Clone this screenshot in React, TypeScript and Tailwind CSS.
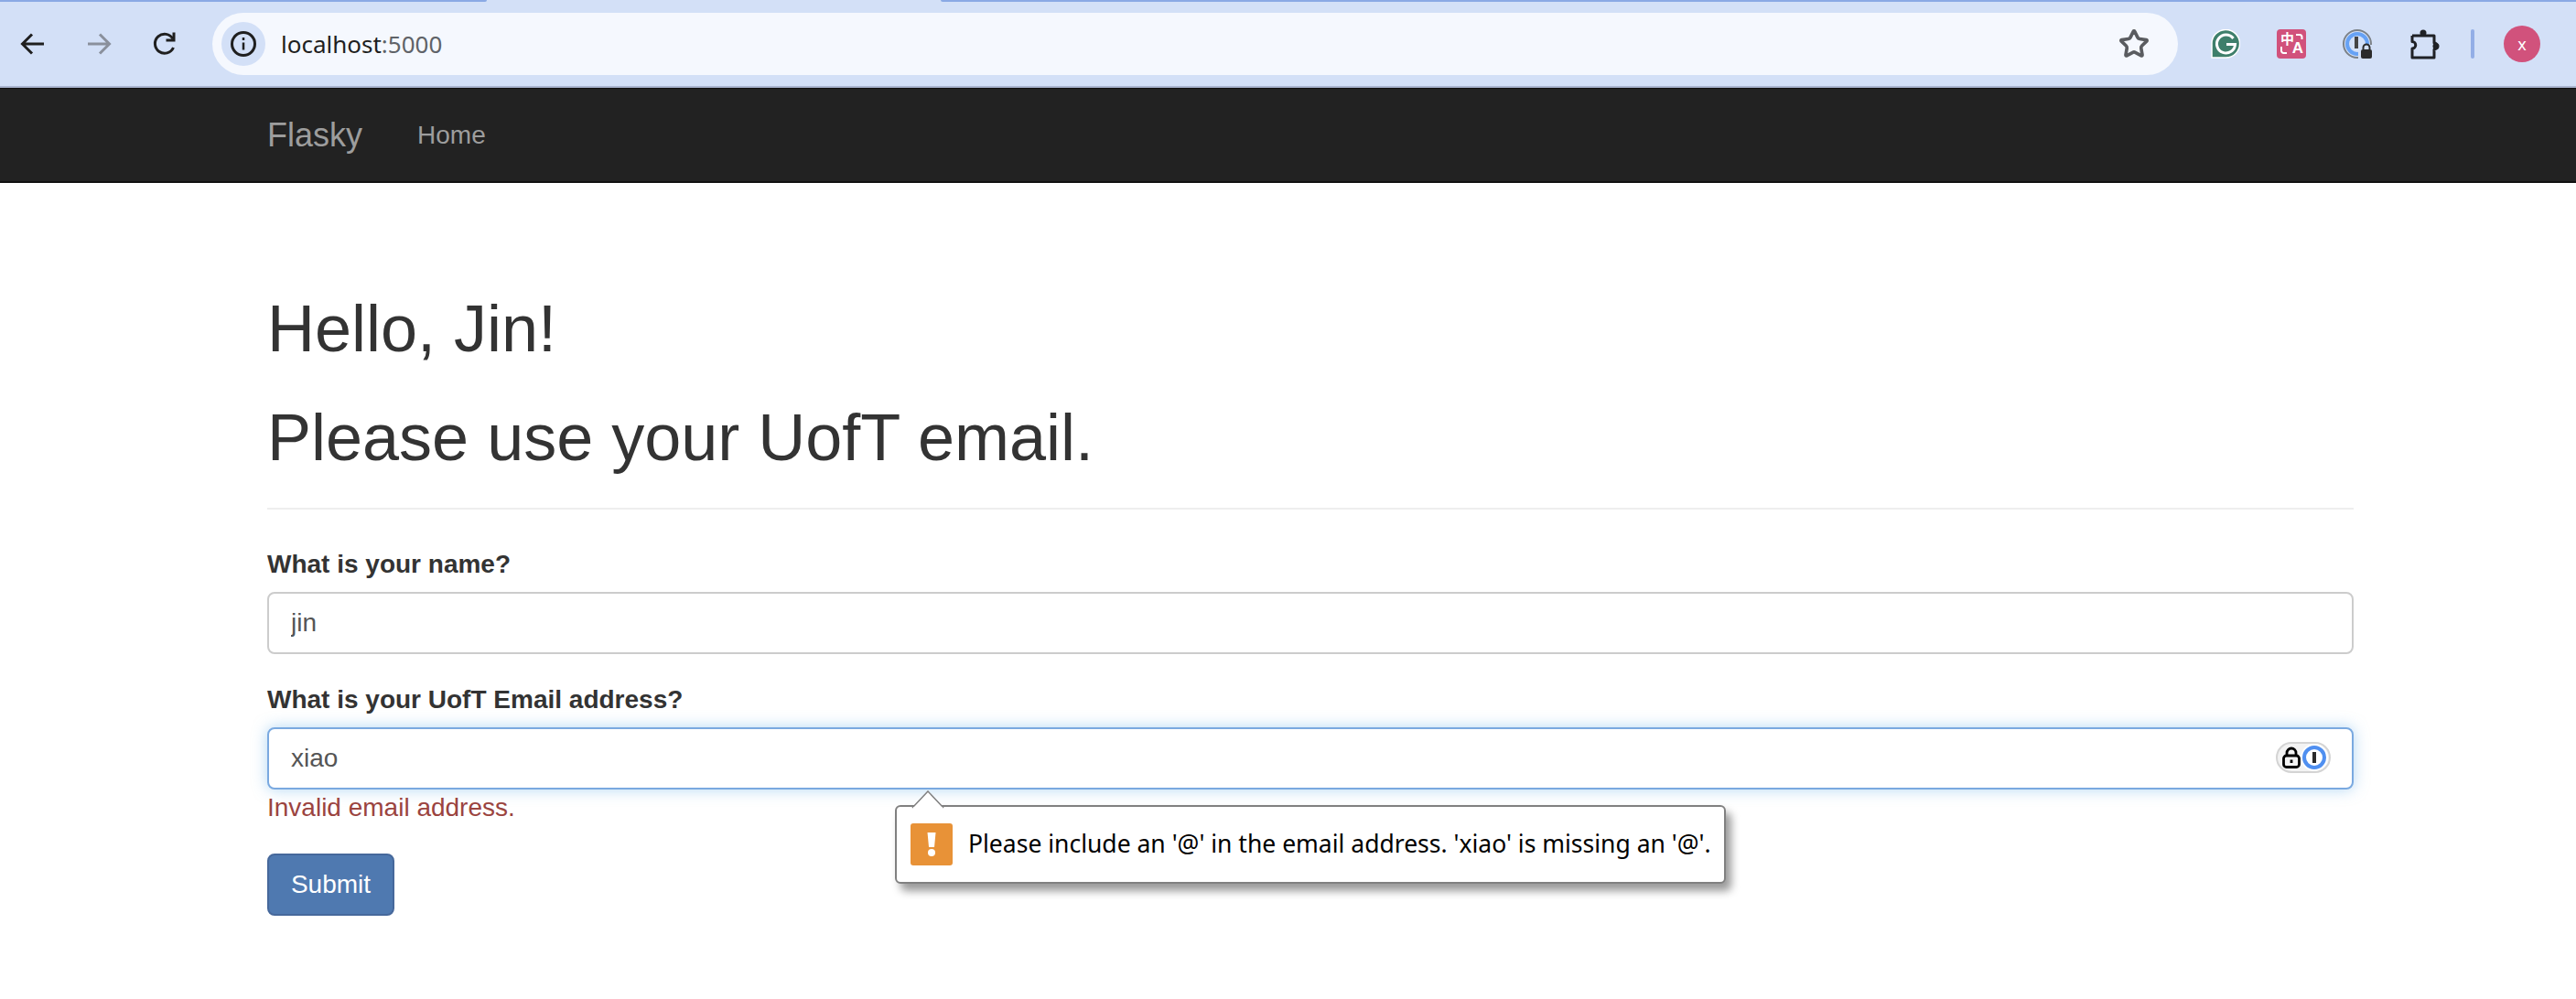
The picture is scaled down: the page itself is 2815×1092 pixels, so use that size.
import React from 'react';
import { Star } from 'lucide-react';

const inputClass = "w-full h-[68px] px-6 rounded-lg text-[28px] text-[#555] bg-white outline-none";

const ChromeToolbar = () => (
  <div className="h-[96px] bg-[#d3e0f7] border-b-2 border-[#aab5cf] flex flex-col">
    <div className="h-[2px] flex">
      <div className="w-[532px] bg-[#8aa9e4] rounded-br-[3px]" />
      <div className="w-[496px]" />
      <div className="flex-1 bg-[#8aa9e4] rounded-bl-[3px]" />
    </div>
    <div className="flex-1 flex items-center">
      <div className="flex items-center w-[232px] pl-[20px] gap-[40px]">
        <svg width="32" height="32" viewBox="0 0 32 32" fill="none" stroke="#1f1f1f" strokeWidth="3">
          <path d="M28 16H5M15 5.500L4.500 16 15 26.500" />
        </svg>
        <svg width="32" height="32" viewBox="0 0 32 32" fill="none" stroke="#8a909c" strokeWidth="3">
          <path d="M4 16h23M17 5.500L27.500 16 17 26.500" />
        </svg>
        <svg width="32" height="32" viewBox="0 0 32 32" fill="none" stroke="#1f1f1f" strokeWidth="3">
          <path d="M25.500 20a10.500 10.500 0 1 1-.5-9.500" />
          <path d="M26 3.500v8.500h-8.500" />
        </svg>
      </div>
      <div className="w-[2148px] h-[68px] bg-[#f5f8fe] rounded-[34px] flex items-center pl-[10px] pr-[31px]">
        <div className="w-[48px] h-[48px] rounded-full bg-[#d3e0f7] flex items-center justify-center">
          <svg width="30" height="30" viewBox="0 0 30 30" fill="none" stroke="#1f1f1f">
            <circle cx="15" cy="15" r="12.500" strokeWidth="3" />
            <path d="M15 13.500v8M15 8v3" strokeWidth="2.500" />
          </svg>
        </div>
        <div className="ml-[17px] text-[26px] text-[#1f1f1f] font-['Noto_Sans',sans-serif] leading-none">
          localhost<span className="text-[#5f6368]">:5000</span>
        </div>
        <Star className="ml-auto" size={34} color="#5a5c60" strokeWidth={2.6} />
      </div>
      <div className="flex-1 flex items-center pl-[36px] gap-[40px]">
        <svg width="32" height="32" viewBox="0 0 32 32">
          <path d="M1 31V16.500a15.300 15.300 0 1 1 15.300 14.500z" fill="#3e7f6b" stroke="#fff" strokeWidth="1.500" />
          <path d="M24.500 10a10 10 0 1 0 2 6.500H17" fill="none" stroke="#fff" strokeWidth="3" />
        </svg>
        <div className="w-[32px] h-[32px] rounded-[4px] bg-[#d1527c] relative text-white leading-none">
          <span className="absolute left-[4px] top-[2px] text-[15px] font-bold font-['Noto_Sans_CJK_SC',sans-serif]">中</span>
          <span className="absolute right-[3px] bottom-[3px] text-[17px] font-bold font-['Liberation_Sans',sans-serif]">A</span>
          <svg className="absolute inset-0" width="32" height="32" viewBox="0 0 32 32" fill="none" stroke="#fff" strokeWidth="2">
            <path d="M21 6h4a2.500 2.500 0 0 1 2.500 2.500V11M5 19v4.500A2.500 2.500 0 0 0 7.500 26H11" />
          </svg>
        </div>
        <svg width="32" height="32" viewBox="0 0 32 32" fill="none">
          <circle cx="16" cy="16" r="15" stroke="#7c8288" strokeWidth="2" />
          <circle cx="16" cy="16" r="11" stroke="#66a2f5" strokeWidth="4" />
          <path d="M15 8v13" stroke="#444" strokeWidth="4" />
          <path d="M17 32V21a4 4 0 0 1 4-4h11v15z" fill="#d3e0f7" />
          <rect x="20" y="22" width="12" height="10" rx="2" fill="#2b2b2b" />
          <path d="M22.500 22v-2a3.500 3.500 0 0 1 7 0v2" stroke="#2b2b2b" strokeWidth="2" />
        </svg>
        <svg className="ml-[2px]" width="32" height="34" viewBox="0 0 32 34" fill="none" stroke="#1f2126" strokeWidth="3" strokeLinejoin="round">
          <path d="M2 8h7.500M2 8v6.500a3 3 0 0 1 0 7.500V32h24V23a3.500 3.500 0 0 0 0-7V8h-7.500M9.500 8h9" />
          <circle cx="14" cy="5" r="3.500" fill="#1f2126" stroke="none" />
          <circle cx="28" cy="19.500" r="3.500" fill="#1f2126" stroke="none" />
        </svg>
        <div className="w-[4px] h-[32px] rounded-full bg-[#93aee6] ml-[-6px]" />
        <div className="w-[40px] h-[40px] rounded-full bg-[#d1527c] text-white flex items-center justify-center text-[18px] ml-[-8px] font-['Noto_Sans',sans-serif]">
          x
        </div>
      </div>
    </div>
  </div>
);

const Navbar = () => (
  <div className="h-[104px] bg-[#222] border-t border-b-2 border-[#111] flex items-center pl-[292px] text-[#9d9d9d] font-['Liberation_Sans',sans-serif]">
    <a className="text-[36px]">Flasky</a>
    <a className="text-[28px] ml-[60px]">Home</a>
  </div>
);

const ValidationPopup = () => (
  <div className="absolute left-[978px] top-[880px] w-[908px] h-[86px] bg-white border-2 border-[#808080] rounded-[6px] shadow-[6px_8px_10px_rgba(0,0,0,0.4)] flex items-center pl-[15px]">
    <svg className="absolute left-[16px] top-[-18px]" width="36" height="20" viewBox="0 0 36 20">
      <path d="M1 19L18 1l17 18" fill="#fff" stroke="#808080" strokeWidth="1.500" />
      <rect x="2" y="18" width="32" height="2" fill="#fff" />
    </svg>
    <div className="w-[46px] h-[46px] bg-[#e89237] rounded-[3px] flex items-center justify-center">
      <svg width="10" height="26" viewBox="0 0 10 26" fill="#fff">
        <path d="M0.500 0h9l-1.500 16h-6z" />
        <circle cx="5" cy="22" r="4" />
      </svg>
    </div>
    <span className="ml-[17px] text-[26.500px] text-black font-['Noto_Sans',sans-serif] whitespace-nowrap">
      Please include an '@' in the email address. 'xiao' is missing an '@'.
    </span>
  </div>
);

export default function App() {
  return (
    <div className="relative h-[1092px] bg-white overflow-hidden font-['Liberation_Sans',sans-serif] text-[#333]">
      <ChromeToolbar />
      <Navbar />
      <div className="ml-[292px] w-[2280px]">
        <div className="mt-[120px] pb-[37px] mb-[40px] border-b-2 border-[#eee]">
          <h1 className="text-[72px] leading-[1.1] mb-[40px]">Hello, Jin!</h1>
          <h1 className="text-[72px] leading-[1.1]">Please use your UofT email.</h1>
        </div>
        <form>
          <div className="mb-[30px]">
            <label className="block text-[28px] font-bold leading-[40px] mb-[10px]">What is your name?</label>
            <input className={`${inputClass} border-2 border-[#ccc]`} defaultValue="jin" />
          </div>
          <div className="mb-[30px] relative">
            <label className="block text-[28px] font-bold leading-[40px] mb-[10px]">What is your UofT Email address?</label>
            <input className={`${inputClass} border-2 border-[#7aa9e0] shadow-[0_0_16px_rgba(102,175,233,0.5)]`} defaultValue="xiao" />
            <div className="absolute right-[25px] top-[66px] w-[60px] h-[34px] rounded-full bg-[#f3f3f3] border-2 border-[#d4d4d4] flex items-center">
              <svg className="ml-[5px]" width="20" height="24" viewBox="0 0 20 24" fill="none" stroke="#000" strokeWidth="2.800">
                <rect x="1.500" y="10" width="17" height="12.500" rx="3" />
                <path d="M5 10V7a5 5 0 0 1 10 0v3M10 14.500v3.500" />
              </svg>
              <div className="w-[30px] h-[30px] rounded-full bg-white flex items-center justify-center">
                <div className="w-[26px] h-[26px] rounded-full border-[4px] border-[#4f8ff0] flex items-center justify-center">
                  <div className="w-[4px] h-[12px] bg-[#2b2b2b]" />
                </div>
              </div>
            </div>
            <div className="text-[28px] leading-[40px] text-[#9b443f]">Invalid email address.</div>
          </div>
          <button type="button" className="h-[68px] w-[139px] rounded-lg bg-[#4f79b0] border-2 border-[#46689b] text-white text-[28px]">
            Submit
          </button>
        </form>
      </div>
      <ValidationPopup />
    </div>
  );
}
